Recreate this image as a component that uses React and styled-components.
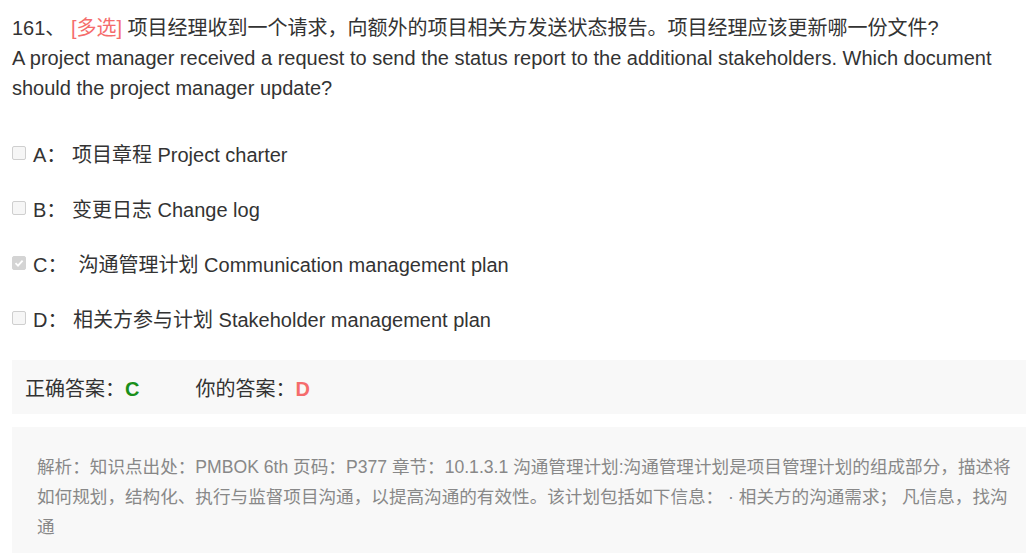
import React from "react";
import styled, { createGlobalStyle } from "styled-components";

const GlobalStyle = createGlobalStyle`
    html, body {
        margin: 0;
        padding: 0;
        overflow: hidden;
        background: #ffffff;
    }
`;

const Page = styled.div`
    width: 1028px;
    padding: 13px 0 0 12px;
    font-family: "Liberation Sans", "Noto Sans CJK SC", sans-serif;
    color: #333333;
`;

const Question = styled.div`
    font-size: 20px;
    line-height: 30px;
`;

const Tag = styled.span`
    color: #f56c6c;
`;

const OptionList = styled.div`
    margin-top: 35px;
    display: flex;
    flex-direction: column;
    gap: 25px;
`;

const Option = styled.div`
    display: flex;
    align-items: center;
    height: 30px;
    font-size: 20px;
    color: #333333;
    white-space: pre;
`;

const CheckBox = styled.span`
    box-sizing: border-box;
    width: 14px;
    height: 14px;
    margin: 0 7px 0 0;
    border: 1px solid ${(p) => (p.checked ? "#d4d4d4" : "#cfcfcf")};
    border-radius: 2px;
    background: ${(p) => (p.checked ? "#d4d4d4" : "#f6f6f6")};
    display: flex;
    align-items: center;
    justify-content: center;
`;

const AnswerBar = styled.div`
    margin-top: 27px;
    height: 54px;
    background: #f8f8f8;
    padding-left: 13px;
    display: flex;
    align-items: center;
    font-size: 20px;
`;

const AnswerItem = styled.span`
    margin-right: ${(p) => p.gap || 0}px;
`;

const Letter = styled.b`
    color: ${(p) => p.color};
    font-family: "Liberation Sans", sans-serif;
`;

const Analysis = styled.div`
    margin-top: 13px;
    background: #f8f8f8;
    padding: 25px 25px 30px 25px;
    font-size: 17.6px;
    line-height: 30px;
    color: #888888;
`;

const options = [
    { key: "A", text: " 项目章程 Project charter" },
    { key: "B", text: " 变更日志 Change log" },
    { key: "C", text: "  沟通管理计划 Communication management plan", checked: true },
    { key: "D", text: " 相关方参与计划 Stakeholder management plan" },
];

const App = () => {
    return (
        <>
            <GlobalStyle />
            <Page>
                <Question>
                    161、 <Tag>[多选]</Tag> 项目经理收到一个请求，向额外的项目相关方发送状态报告。项目经理应该更新哪一份文件?
                    <br />
                    A project manager received a request to send the status report to the additional stakeholders. Which document should the project manager update?
                </Question>
                <OptionList>
                    {options.map((o) => (
                        <Option key={o.key}>
                            <CheckBox checked={o.checked}>
                                {o.checked && (
                                    <svg width="10" height="10" viewBox="0 0 10 10">
                                        <path d="M1.5 5.2 L4 7.6 L8.6 2.6" fill="none" stroke="#ffffff" strokeWidth="1.8" />
                                    </svg>
                                )}
                            </CheckBox>
                            {o.key}：{o.text}
                        </Option>
                    ))}
                </OptionList>
                <AnswerBar>
                    <AnswerItem gap={56}>
                        正确答案：<Letter color="#1a8f1a">C</Letter>
                    </AnswerItem>
                    <AnswerItem>
                        你的答案：<Letter color="#f56c6c">D</Letter>
                    </AnswerItem>
                </AnswerBar>
                <Analysis>
                    解析：知识点出处：PMBOK 6th 页码：P377 章节：10.1.3.1 沟通管理计划:沟通管理计划是项目管理计划的组成部分，描述将如何规划，结构化、执行与监督项目沟通，以提高沟通的有效性。该计划包括如下信息： · 相关方的沟通需求； 凡信息，找沟通
                </Analysis>
            </Page>
        </>
    );
};

export default App;
